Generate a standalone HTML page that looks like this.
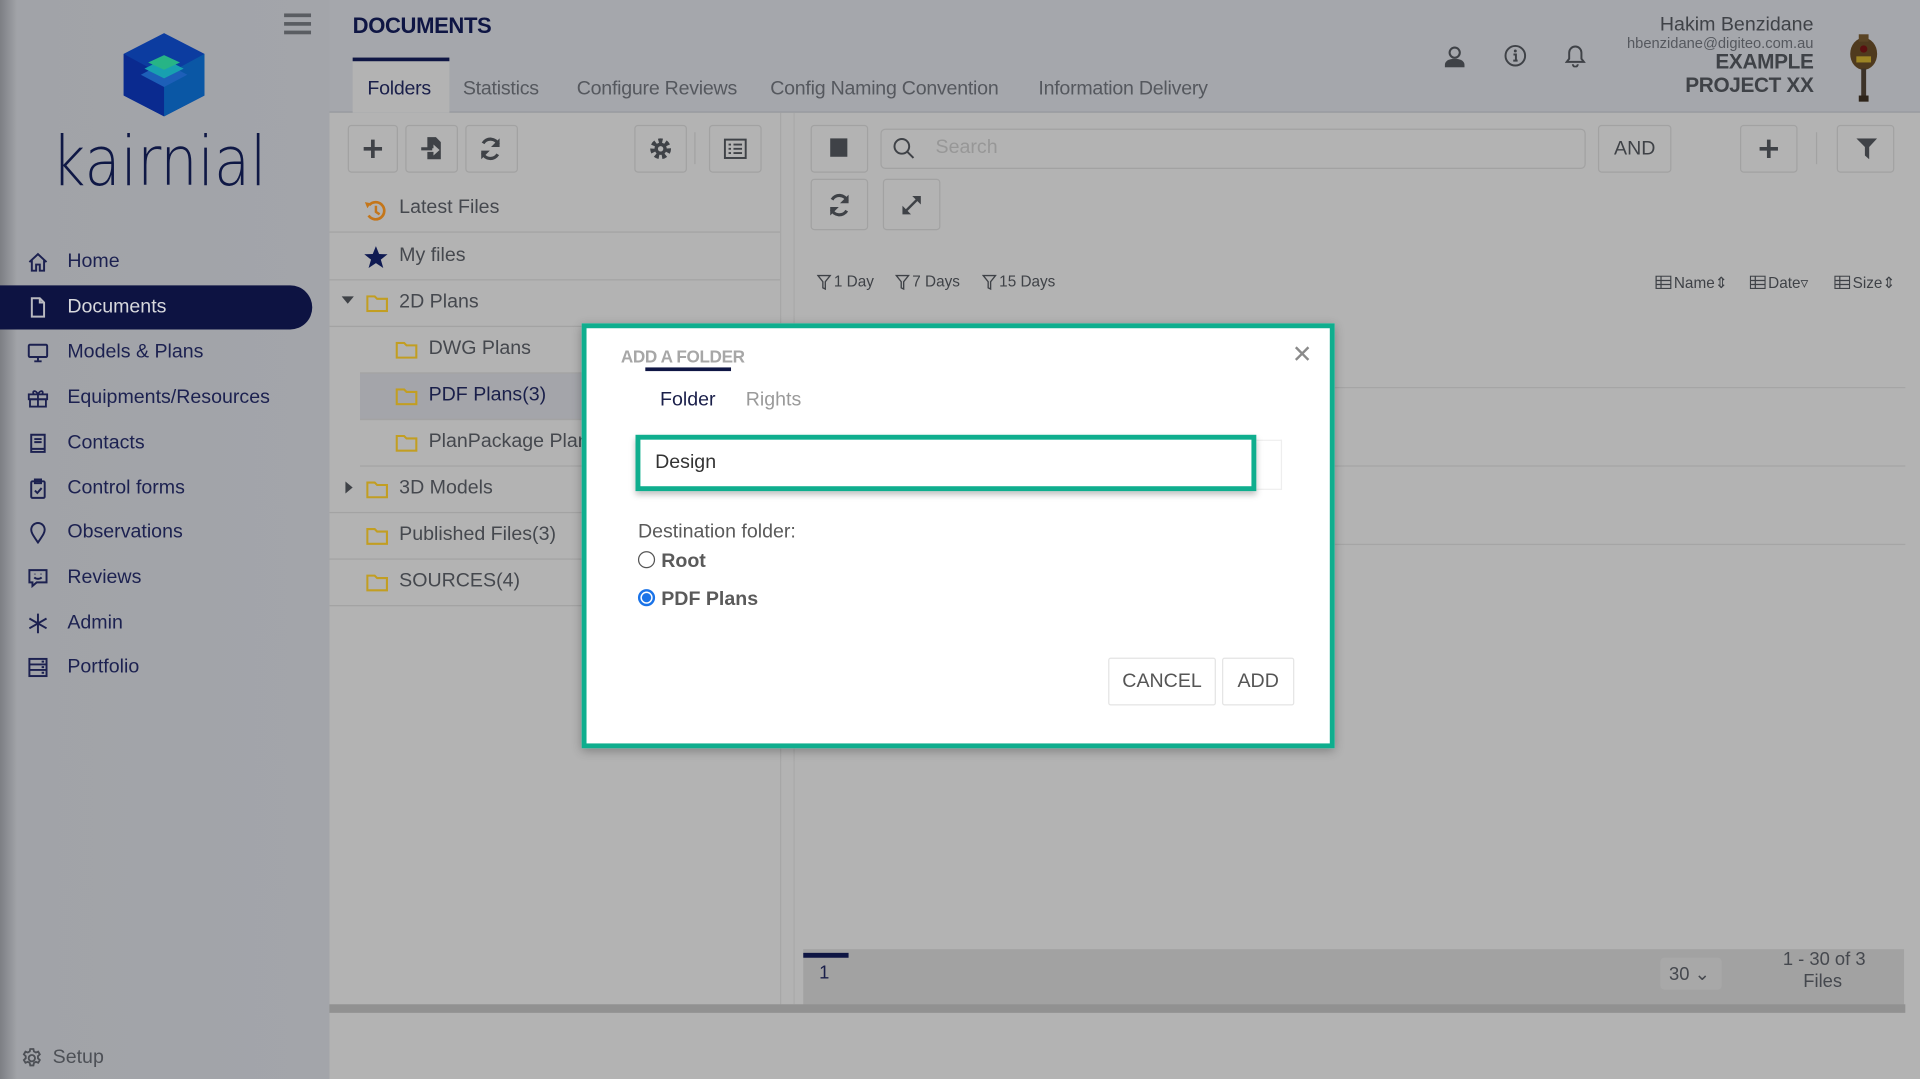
<!DOCTYPE html>
<html><head><meta charset="utf-8"><style>
*{box-sizing:border-box;margin:0;padding:0}
html,body{width:1920px;height:1079px;overflow:hidden;background:#b3b3b3;font-family:"Liberation Sans",sans-serif}
#w{position:absolute;left:0;top:0;width:1568px;height:881px;transform:scale(1.22449,1.22474);transform-origin:0 0;background:#b3b3b3}
.a{position:absolute}
.side{left:0;top:0;width:269px;height:881px;background:#a3a5aa;background-image:linear-gradient(90deg,#7d7f84 0,#a1a3a8 14px,#a3a5aa 100%)}
.nav{position:absolute;left:22px;font-size:16px;color:#1c2150;display:flex;align-items:center}
.nav svg{width:18px;height:18px;margin-right:15px}
.hdr{left:269px;top:0;width:1299px;height:92px;background:#a5a7ac;border-bottom:1px solid #96989d}
.tab{position:absolute;top:64px;font-size:16px;color:#55585e;letter-spacing:-0.2px}
.btn{position:absolute;border:1px solid #a2a2a2;border-radius:3px;background:#b3b3b3}
.tree{position:absolute;left:269px;width:368px;height:38px;border-bottom:1px solid #a3a3a3;font-size:16px;color:#45484e}
.tree span{position:absolute;top:9px}
.fold{position:absolute;top:12px;width:18px;height:14px}
.fl{position:absolute;top:223px;font-size:12.5px;color:#3f4247;display:flex;align-items:center}
.fl svg{margin-right:2px}
</style></head><body><div id="w">
<div class="a side"></div>
<div class="a" style="left:232px;top:11px;width:22px;height:3px;background:#5a5d62;box-shadow:0 7px 0 #5a5d62,0 14px 0 #5a5d62"></div>
<svg class="a" style="left:100px;top:26px" width="68" height="70" viewBox="0 0 68 70">
<polygon points="34,1 67,18 67,52 34,69 1,52 1,18" fill="#0c3ca0"/>
<polygon points="1,18 34,36 34,69 1,52" fill="#0a2a8f"/>
<polygon points="67,18 34,36 34,69 67,52" fill="#0a57a5"/>
<polygon points="34,45 53,35 34,25 15,35" fill="#1d5fb8"/>
<polygon points="34,38 50,30 34,22 18,30" fill="#18a0b0"/>
<polygon points="34,31 47,25 34,19 21,25" fill="#27b486"/>
</svg>
<div class="a" style="left:42px;top:100px;font-size:56px;color:#0f1845;letter-spacing:0px;font-family:'DejaVu Sans','Liberation Sans',sans-serif;transform:scaleX(0.86);transform-origin:0 0;font-weight:200">kairnial</div>
<div class="nav" style="top:205px"><svg viewBox="0 0 18 18" fill="none" stroke="#1c2150" stroke-width="1.6"><path d="M2 9L9 2.5 16 9M4 7.5V16h3.5v-5h3v5H14V7.5"/></svg>Home</div>
<div class="a" style="left:0;top:233px;width:255px;height:36px;background:#0d1342;border-radius:0 18px 18px 0"></div>
<div class="nav" style="top:242px;color:#d8d9dd"><svg viewBox="0 0 18 18" fill="none" stroke="#b8b9bf" stroke-width="1.6"><path d="M4 1.5h6.5l3.5 3.5v11.5H4z M10.5 1.5V5H14"/></svg>Documents</div>
<div class="nav" style="top:279px"><svg viewBox="0 0 18 18" fill="none" stroke="#1c2150" stroke-width="1.6"><rect x="1.5" y="2.5" width="15" height="10" rx="1"/><path d="M6 16h6M9 12.5V16"/></svg>Models &amp; Plans</div>
<div class="nav" style="top:316px"><svg viewBox="0 0 18 18" fill="none" stroke="#1c2150" stroke-width="1.5"><rect x="1.5" y="6" width="15" height="4"/><rect x="2.5" y="10" width="13" height="6"/><path d="M9 6v10M9 6C7 2 4 3 5.5 6M9 6c2-4 5-3 3.5 0"/></svg>Equipments/Resources</div>
<div class="nav" style="top:353px"><svg viewBox="0 0 18 18" fill="none" stroke="#1c2150" stroke-width="1.6"><path d="M3.5 2h11v14h-11zM3.5 13.5h11M6 5.5h6M6 8h6"/></svg>Contacts</div>
<div class="nav" style="top:390px"><svg viewBox="0 0 18 18" fill="none" stroke="#1c2150" stroke-width="1.6"><rect x="3.5" y="3" width="11" height="13.5" rx="1"/><rect x="6.5" y="1.5" width="5" height="3"/><path d="M6.5 10.5l2 2 3.5-4"/></svg>Control forms</div>
<div class="nav" style="top:426px"><svg viewBox="0 0 18 18" fill="none" stroke="#1c2150" stroke-width="1.6"><path d="M9 17C5 11 3.5 9 3.5 6.5a5.5 5.5 0 0111 0C14.5 9 13 11 9 17z"/></svg>Observations</div>
<div class="nav" style="top:463px"><svg viewBox="0 0 18 18" fill="none" stroke="#1c2150" stroke-width="1.6"><path d="M2 2.5h14v10H8l-3.5 3v-3H2z"/><path d="M6 8.5c1.5 1.5 4.5 1.5 6 0M6.5 5.5v.5M11.5 5.5v.5"/></svg>Reviews</div>
<div class="nav" style="top:500px"><svg viewBox="0 0 18 18" fill="none" stroke="#1c2150" stroke-width="1.6"><path d="M9 1v16M2 5l14 8M16 5L2 13"/></svg>Admin</div>
<div class="nav" style="top:536px"><svg viewBox="0 0 18 18" fill="none" stroke="#1c2150" stroke-width="1.6"><rect x="2" y="2" width="14" height="14"/><path d="M2 6.5h14M2 11h14M12 4.2h2M12 8.7h2M12 13.3h2"/></svg>Portfolio</div>
<div class="nav" style="top:855px;left:17px;color:#4d5056;font-size:16px"><svg viewBox="0 0 18 18" fill="none" stroke="#4d5056" stroke-width="1.5" style="margin-right:8px"><circle cx="9" cy="9" r="2.6"/><path d="M7.7 1.5h2.6l.4 2 1.6.9 1.9-.7 1.3 2.2-1.5 1.4v1.8l1.5 1.4-1.3 2.2-1.9-.7-1.6.9-.4 2H7.7l-.4-2-1.6-.9-1.9.7-1.300-2.2 1.5-1.4V7.3L2.5 5.9l1.3-2.2 1.9.7 1.6-.9z"/></svg>Setup</div>

<div class="a hdr"></div>
<div class="a" style="left:288px;top:11px;font-size:18px;font-weight:bold;color:#0f1644;letter-spacing:-0.3px">DOCUMENTS</div>
<div class="a" style="left:288px;top:47px;width:79px;height:45px;background:#b3b3b3;border-top:3px solid #0f1644"></div>
<div class="tab" style="left:300px;color:#1a1f4a">Folders</div>
<div class="tab" style="left:378px">Statistics</div>
<div class="tab" style="left:471px">Configure Reviews</div>
<div class="tab" style="left:629px">Config Naming Convention</div>
<div class="tab" style="left:848px">Information Delivery</div>
<svg class="a" style="left:1179px;top:36px" width="18" height="19" viewBox="0 0 18 19"><circle cx="9" cy="7" r="5" fill="#3f4247"/><path d="M1 19v-2c0-3 3-5 8-5s8 2 8 5v2z" fill="#3f4247"/><circle cx="9" cy="7" r="3.3" fill="#a5a7ac"/></svg>
<svg class="a" style="left:1228px;top:36px" width="19" height="19" viewBox="0 0 19 19"><circle cx="9.5" cy="9.5" r="8" fill="none" stroke="#3f4247" stroke-width="1.6"/><circle cx="9.5" cy="5.6" r="1.2" fill="#3f4247"/><path d="M8 8.5h2v5h1.3M7.8 13.5h3.6" stroke="#3f4247" stroke-width="1.6" fill="none"/></svg>
<svg class="a" style="left:1278px;top:36px" width="17" height="19" viewBox="0 0 17 19"><path d="M8.5 2a5 5 0 015 5v5l2 2.5H1.5l2-2.5V7a5 5 0 015-5zM6.5 16.5a2 2 0 004 0" fill="none" stroke="#3f4247" stroke-width="1.6"/></svg>
<div class="a" style="right:87px;top:12px;text-align:right;color:#3f4247">
<div style="font-size:16px;line-height:18px">Hakim Benzidane</div>
<div style="font-size:12px;line-height:11px;color:#55585e">hbenzidane@digiteo.com.au</div>
<div style="font-size:17px;line-height:19px;font-weight:bold;letter-spacing:-0.3px">EXAMPLE<br>PROJECT XX</div></div>
<svg class="a" style="left:1508px;top:26px" width="28" height="58" viewBox="0 0 28 58"><ellipse cx="14" cy="18" rx="11" ry="13" fill="#4f3a1e"/><rect x="10" y="2" width="8" height="6" fill="#5a4424"/><rect x="8" y="20" width="12" height="5" fill="#9c8424"/><circle cx="14" cy="14" r="3" fill="#5a1010"/><rect x="12" y="30" width="4" height="24" fill="#3c3228"/><rect x="10" y="52" width="8" height="5" fill="#2e241a"/></svg>

<div class="btn" style="left:284px;top:102px;width:41px;height:39px"></div>
<div class="btn" style="left:331px;top:102px;width:43px;height:39px"></div>
<div class="btn" style="left:380px;top:102px;width:43px;height:39px"></div>
<div class="btn" style="left:518px;top:102px;width:43px;height:39px"></div>
<div class="btn" style="left:579px;top:102px;width:43px;height:39px"></div>
<div class="a" style="left:567px;top:108px;width:1px;height:26px;background:#a2a2a2"></div>
<svg class="a" style="left:296px;top:113px" width="17" height="17"><path d="M8.5 1v15M1 8.5h15" stroke="#3f4247" stroke-width="3"/></svg>
<svg class="a" style="left:343px;top:111px" width="19" height="20" viewBox="0 0 19 20"><path d="M6 1h7l4 4v14H6v-6h5v3l5-4.5L11 7v3H6z" fill="#3f4247"/><path d="M1 10.5h9" stroke="#3f4247" stroke-width="2.5"/></svg>
<svg class="a" style="left:391px;top:112px" width="19" height="19" viewBox="0 0 19 19"><path d="M16 6A7 7 0 003.5 5M3 13a7 7 0 0012.5 1" fill="none" stroke="#3f4247" stroke-width="2.6"/><path d="M17 1v7h-7zM2 18v-7h7z" fill="#3f4247"/></svg>
<svg class="a" style="left:530px;top:112px" width="19" height="19" viewBox="0 0 19 19"><circle cx="9.5" cy="9.5" r="6" fill="none" stroke="#3f4247" stroke-width="5" stroke-dasharray="3 2.3"/><circle cx="9.5" cy="9.5" r="5" fill="#3f4247"/><circle cx="9.5" cy="9.5" r="2.2" fill="#b3b3b3"/></svg>
<svg class="a" style="left:591px;top:113px" width="19" height="17" viewBox="0 0 19 17"><rect x="1" y="1" width="17" height="15" fill="none" stroke="#3f4247" stroke-width="1.6"/><path d="M4 5h2M8 5h7M4 8.5h2M8 8.5h7M4 12h2M8 12h7" stroke="#3f4247" stroke-width="1.5"/></svg>
<div class="a" style="left:637px;top:92px;width:1px;height:728px;background:#a7a7a7"></div>
<div class="a" style="left:648px;top:92px;width:1px;height:728px;background:#a9a9a9"></div>

<div class="tree" style="top:152px"><svg class="fold" style="left:28px;top:10px;width:20px;height:20px" viewBox="0 0 20 20"><path d="M4.5 5.5A7 7 0 1 1 4 14" fill="none" stroke="#c4761a" stroke-width="2.2"/><path d="M1 3l5 1-3 4z" fill="#c4761a"/><path d="M10 6v5l3 2" fill="none" stroke="#c4761a" stroke-width="2"/></svg><span style="left:57px">Latest Files</span></div>
<div class="tree" style="top:191px"><svg class="fold" style="left:28px;top:9px;width:20px;height:20px" viewBox="0 0 20 20"><polygon points="10,1 12.6,7.4 19.5,7.6 14,12 16,18.8 10,14.8 4,18.8 6,12 0.5,7.6 7.4,7.4" fill="#0f1a52"/></svg><span style="left:57px">My files</span></div>
<div class="tree" style="top:229px"><svg class="a" style="left:10px;top:12px" width="10" height="8"><path d="M0 1h10L5 7z" fill="#3f4247"/></svg><svg class="fold" style="left:30px" viewBox="0 0 18 14"><path d="M1 1h6l2 2h8v10H1z" fill="none" stroke="#c29e22" stroke-width="1.7"/></svg><span style="left:57px">2D Plans</span></div>
<div class="tree" style="top:267px;left:294px;width:343px"><svg class="fold" style="left:29px" viewBox="0 0 18 14"><path d="M1 1h6l2 2h8v10H1z" fill="none" stroke="#c29e22" stroke-width="1.7"/></svg><span style="left:56px">DWG Plans</span></div>
<div class="tree" style="top:305px;left:294px;width:343px;background:#a4a5aa"><svg class="fold" style="left:29px" viewBox="0 0 18 14"><path d="M1 1h6l2 2h8v10H1z" fill="none" stroke="#c29e22" stroke-width="1.7"/></svg><span style="left:56px;color:#1a1f4a">PDF Plans(3)</span></div>
<div class="tree" style="top:343px;left:294px;width:343px"><svg class="fold" style="left:29px" viewBox="0 0 18 14"><path d="M1 1h6l2 2h8v10H1z" fill="none" stroke="#c29e22" stroke-width="1.7"/></svg><span style="left:56px">PlanPackage Plans</span></div>
<div class="tree" style="top:381px"><svg class="a" style="left:13px;top:12px" width="7" height="10"><path d="M0 0v10l6-5z" fill="#3f4247"/></svg><svg class="fold" style="left:30px" viewBox="0 0 18 14"><path d="M1 1h6l2 2h8v10H1z" fill="none" stroke="#c29e22" stroke-width="1.7"/></svg><span style="left:57px">3D Models</span></div>
<div class="tree" style="top:419px"><svg class="fold" style="left:30px" viewBox="0 0 18 14"><path d="M1 1h6l2 2h8v10H1z" fill="none" stroke="#c29e22" stroke-width="1.7"/></svg><span style="left:57px">Published Files(3)</span></div>
<div class="tree" style="top:457px"><svg class="fold" style="left:30px" viewBox="0 0 18 14"><path d="M1 1h6l2 2h8v10H1z" fill="none" stroke="#c29e22" stroke-width="1.7"/></svg><span style="left:57px">SOURCES(4)</span></div>

<div class="btn" style="left:662px;top:102px;width:47px;height:39px"></div>
<div class="a" style="left:678px;top:113px;width:14px;height:15px;background:#3f4247"></div>
<div class="btn" style="left:719px;top:105px;width:576px;height:33px;border-radius:4px"></div>
<svg class="a" style="left:729px;top:112px" width="18" height="18"><circle cx="7.5" cy="7.5" r="6" fill="none" stroke="#3f4247" stroke-width="1.6"/><path d="M12 12l5 5" stroke="#3f4247" stroke-width="1.6"/></svg>
<div class="a" style="left:764px;top:112px;font-size:16px;color:#979797">Search</div>
<div class="btn" style="left:1305px;top:102px;width:60px;height:39px;text-align:center;line-height:37px;font-size:16px;color:#3f4247">AND</div>
<div class="btn" style="left:1421px;top:102px;width:47px;height:39px"></div>
<svg class="a" style="left:1436px;top:113px" width="17" height="17"><path d="M8.5 1v15M1 8.5h15" stroke="#3f4247" stroke-width="3"/></svg>
<div class="a" style="left:1483px;top:108px;width:1px;height:26px;background:#a2a2a2"></div>
<div class="btn" style="left:1500px;top:102px;width:47px;height:39px"></div>
<svg class="a" style="left:1516px;top:113px" width="17" height="17"><path d="M0 0h17l-6.5 7v10L7 14V7z" fill="#3f4247"/></svg>
<div class="btn" style="left:662px;top:146px;width:47px;height:42px"></div>
<svg class="a" style="left:676px;top:158px" width="19" height="19" viewBox="0 0 19 19"><path d="M16 6A7 7 0 003.5 5M3 13a7 7 0 0012.5 1" fill="none" stroke="#3f4247" stroke-width="2.6"/><path d="M17 1v7h-7zM2 18v-7h7z" fill="#3f4247"/></svg>
<div class="btn" style="left:721px;top:146px;width:47px;height:42px"></div>
<svg class="a" style="left:736px;top:159px" width="17" height="17"><path d="M3 14l11-11" stroke="#3f4247" stroke-width="2"/><path d="M9 1h7v7zM1 9v7h7z" fill="#3f4247"/></svg>
<div class="fl" style="left:667px"><svg width="12" height="13" viewBox="0 0 12 13"><path d="M1 1h10L7 6v6L5 11V6z" fill="none" stroke="#3f4247" stroke-width="1.1"/></svg>1 Day</div>
<div class="fl" style="left:731px"><svg width="12" height="13" viewBox="0 0 12 13"><path d="M1 1h10L7 6v6L5 11V6z" fill="none" stroke="#3f4247" stroke-width="1.1"/></svg>7 Days</div>
<div class="fl" style="left:802px"><svg width="12" height="13" viewBox="0 0 12 13"><path d="M1 1h10L7 6v6L5 11V6z" fill="none" stroke="#3f4247" stroke-width="1.1"/></svg>15 Days</div>
<div class="fl" style="left:1352px"><svg width="13" height="11" viewBox="0 0 13 11"><path d="M.5.5h12v10H.5zM.5 4h12M.5 7.3h12M4.5.5v10" fill="none" stroke="#3f4247"/></svg>Name⇕</div>
<div class="fl" style="left:1429px"><svg width="13" height="11" viewBox="0 0 13 11"><path d="M.5.5h12v10H.5zM.5 4h12M.5 7.3h12M4.5.5v10" fill="none" stroke="#3f4247"/></svg>Date▿</div>
<div class="fl" style="left:1498px"><svg width="13" height="11" viewBox="0 0 13 11"><path d="M.5.5h12v10H.5zM.5 4h12M.5 7.3h12M4.5.5v10" fill="none" stroke="#3f4247"/></svg>Size⇕</div>
<div class="a" style="left:1090px;top:316px;width:466px;height:1px;background:#a5a5a5"></div>
<div class="a" style="left:1090px;top:380px;width:466px;height:1px;background:#a5a5a5"></div>
<div class="a" style="left:1090px;top:444px;width:466px;height:1px;background:#a5a5a5"></div>
<div class="a" style="left:656px;top:775px;width:899px;height:47px;background:#a2a2a2"></div>
<div class="a" style="left:656px;top:778px;width:37px;height:4px;background:#0f1644"></div>
<div class="a" style="left:669px;top:786px;font-size:15px;color:#1a1f4a">1</div>
<div class="a" style="left:1356px;top:782px;width:50px;height:26px;background:#a8a8a8;border-radius:3px;font-size:15px;color:#45484e;padding:4px 0 0 7px">30 ⌄</div>
<div class="a" style="left:1456px;top:775px;font-size:15px;line-height:18px;color:#45484e">1 - 30 of 3<br>&nbsp;&nbsp;&nbsp;&nbsp;Files</div>
<div class="a" style="left:269px;top:820px;width:1287px;height:7px;background:#919191"></div>

<div class="a" style="left:475px;top:264px;width:615px;height:347px;background:#fff;border:4px solid #0fae8e;box-shadow:0 2px 8px rgba(0,0,0,.3)"></div>
<div class="a" style="left:507px;top:283px;font-size:14px;font-weight:bold;color:#a7a7a7;letter-spacing:-0.3px">ADD A FOLDER</div>
<div class="a" style="left:527px;top:300px;width:70px;height:3px;background:#0f1644"></div>
<div class="a" style="left:1055px;top:277px;font-size:20px;color:#8a8a8a">✕</div>
<div class="a" style="left:539px;top:318px;font-size:16px;color:#1a1f4a">Folder</div>
<div class="a" style="left:609px;top:318px;font-size:16px;color:#9a9a9a">Rights</div>
<div class="a" style="left:1020px;top:359px;width:27px;height:41px;border:1px solid #eee;border-left:none"></div>
<div class="a" style="left:519px;top:355px;width:507px;height:46px;border:4px solid #0fae8e;background:#fff;box-shadow:0 3px 5px rgba(0,0,0,.25);font-size:16px;color:#333;padding:10px 12px">Design</div>
<div class="a" style="left:521px;top:426px;font-size:16px;color:#5a5a5a">Destination folder:</div>
<div class="a" style="left:521px;top:450px;width:14px;height:14px;border:1px solid #555;border-radius:50%"></div>
<div class="a" style="left:540px;top:450px;font-size:16px;font-weight:bold;color:#5a5a5a">Root</div>
<div class="a" style="left:521px;top:481px;width:14px;height:14px;border:2px solid #1a73e8;border-radius:50%;background:radial-gradient(#1a73e8 0 3.5px,#fff 4px)"></div>
<div class="a" style="left:540px;top:481px;font-size:16px;font-weight:bold;color:#5a5a5a">PDF Plans</div>
<div class="a" style="left:905px;top:537px;width:88px;height:39px;border:1px solid #e4e4e4;border-radius:2px;font-size:16px;color:#555;text-align:center;line-height:37px">CANCEL</div>
<div class="a" style="left:998px;top:537px;width:59px;height:39px;border:1px solid #e4e4e4;border-radius:2px;font-size:16px;color:#555;text-align:center;line-height:37px">ADD</div>
</div></body></html>
